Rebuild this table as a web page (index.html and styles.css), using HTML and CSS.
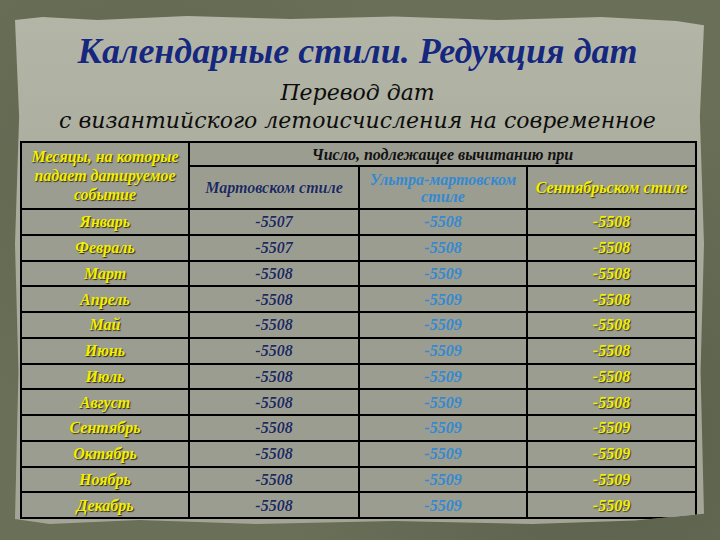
FILE: index.html
```html
<!DOCTYPE html>
<html lang="ru">
<head>
<meta charset="utf-8">
<link rel="stylesheet" href="styles.css">
</head>
<body>
<div class="page">
  <div class="paper">
    <h1 class="title">Календарные стили. Редукция дат</h1>
    <p class="sub1">Перевод дат</p>
    <p class="sub2">с византийского летоисчисления на современное</p>
    <table class="grid">
      <colgroup>
        <col class="c1"><col class="c2"><col class="c3"><col class="c4">
      </colgroup>
      <thead>
        <tr class="h1row">
          <th rowspan="2" class="m hmonth">Месяцы, на которые падает датируемое событие</th>
          <th colspan="3" class="hnum">Число, подлежащее вычитанию при</th>
        </tr>
        <tr class="h2row">
          <th class="n">Мартовском стиле</th>
          <th class="u">Ультра-мартовском стиле</th>
          <th class="s">Сентябрьском стиле</th>
        </tr>
      </thead>
      <tbody>
        <tr><td class="m">Январь</td><td class="n">-5507</td><td class="u">-5508</td><td class="s">-5508</td></tr>
        <tr><td class="m">Февраль</td><td class="n">-5507</td><td class="u">-5508</td><td class="s">-5508</td></tr>
        <tr><td class="m">Март</td><td class="n">-5508</td><td class="u">-5509</td><td class="s">-5508</td></tr>
        <tr><td class="m">Апрель</td><td class="n">-5508</td><td class="u">-5509</td><td class="s">-5508</td></tr>
        <tr><td class="m">Май</td><td class="n">-5508</td><td class="u">-5509</td><td class="s">-5508</td></tr>
        <tr><td class="m">Июнь</td><td class="n">-5508</td><td class="u">-5509</td><td class="s">-5508</td></tr>
        <tr><td class="m">Июль</td><td class="n">-5508</td><td class="u">-5509</td><td class="s">-5508</td></tr>
        <tr><td class="m">Август</td><td class="n">-5508</td><td class="u">-5509</td><td class="s">-5508</td></tr>
        <tr><td class="m">Сентябрь</td><td class="n">-5508</td><td class="u">-5509</td><td class="s">-5509</td></tr>
        <tr><td class="m">Октябрь</td><td class="n">-5508</td><td class="u">-5509</td><td class="s">-5509</td></tr>
        <tr><td class="m">Ноябрь</td><td class="n">-5508</td><td class="u">-5509</td><td class="s">-5509</td></tr>
        <tr><td class="m">Декабрь</td><td class="n">-5508</td><td class="u">-5509</td><td class="s">-5509</td></tr>
      </tbody>
    </table>
  </div>
</div>
</body>
</html>
```

FILE: styles.css
```css
html, body {
  margin: 0;
  padding: 0;
}
body {
  width: 720px;
  height: 540px;
  overflow: hidden;
  font-family: "Liberation Serif", "Times New Roman", serif;
}
.page {
  width: 720px;
  height: 540px;
  box-sizing: border-box;
  padding: 15px 16px 16px 15px;
  background:
    radial-gradient(circle at 20% 30%, rgba(90, 96, 74, 0.6), transparent 40%),
    radial-gradient(circle at 85% 80%, rgba(80, 86, 66, 0.6), transparent 45%),
    #6a6f58;
}
.paper {
  height: 100%;
  box-sizing: border-box;
  padding: 0 9px 0 5px;
  background: linear-gradient(180deg, #b3b5a6 0%, #a9ab9c 40%, #a4a596 100%);
  clip-path: polygon(0 1%, 4% 0.4%, 12% 1%, 25% 0.2%, 40% 0.8%, 55% 0.3%, 70% 1%, 85% 0.4%, 96% 1.2%, 100% 2%, 99.4% 20%, 100% 45%, 99.5% 70%, 100% 98%, 90% 99.3%, 75% 100%, 55% 99.4%, 35% 100%, 18% 99.2%, 5% 100%, 0 99%, 0.5% 70%, 0 45%, 0.6% 20%);
}
.title {
  margin: 0;
  padding-top: 16px;
  height: 46px;
  font-size: 36px;
  line-height: 40px;
  font-weight: bold;
  font-style: italic;
  color: #16287e;
  text-align: center;
  text-shadow: 0 0 1px rgba(255, 255, 255, 0.4);
}
.sub1, .sub2 {
  margin: 0;
  font-family: "DejaVu Serif", "Liberation Serif", serif;
  font-style: italic;
  color: #0c0c0c;
  text-align: center;
  font-size: 22px;
  line-height: 28px;
}
.sub1 {
  padding-top: 2px;
}
.sub2 {
  height: 34px;
}
.grid {
  width: 675px;
  border-collapse: collapse;
  table-layout: fixed;
  background: #9c9d91;
  font-weight: bold;
  font-style: italic;
  font-size: 16px;
}
.c1 { width: 168px; }
.c2 { width: 170px; }
.c3 { width: 168px; }
.c4 { width: 169px; }
.grid th, .grid td {
  border: 2px solid #000;
  padding: 0 3px;
  text-align: center;
  font-weight: bold;
  line-height: 17px;
}
.grid tbody td {
  height: 23.75px;
}
.h1row th {
  height: 22px;
}
.h2row th {
  height: 41px;
}
.hmonth {
  line-height: 19px !important;
}
.hnum {
  color: #111;
  padding-right: 0;
}
.m {
  color: #f2f000;
  text-shadow: 1px 1px 1px #2c2c20;
}
.n {
  color: #1b2a5c;
  text-shadow: 0 0 1px rgba(255, 255, 255, 0.35);
}
.u {
  color: #3489d0;
}
.s {
  color: #f2f000;
  text-shadow: 1px 1px 1px #3a3a2c;
}
```
